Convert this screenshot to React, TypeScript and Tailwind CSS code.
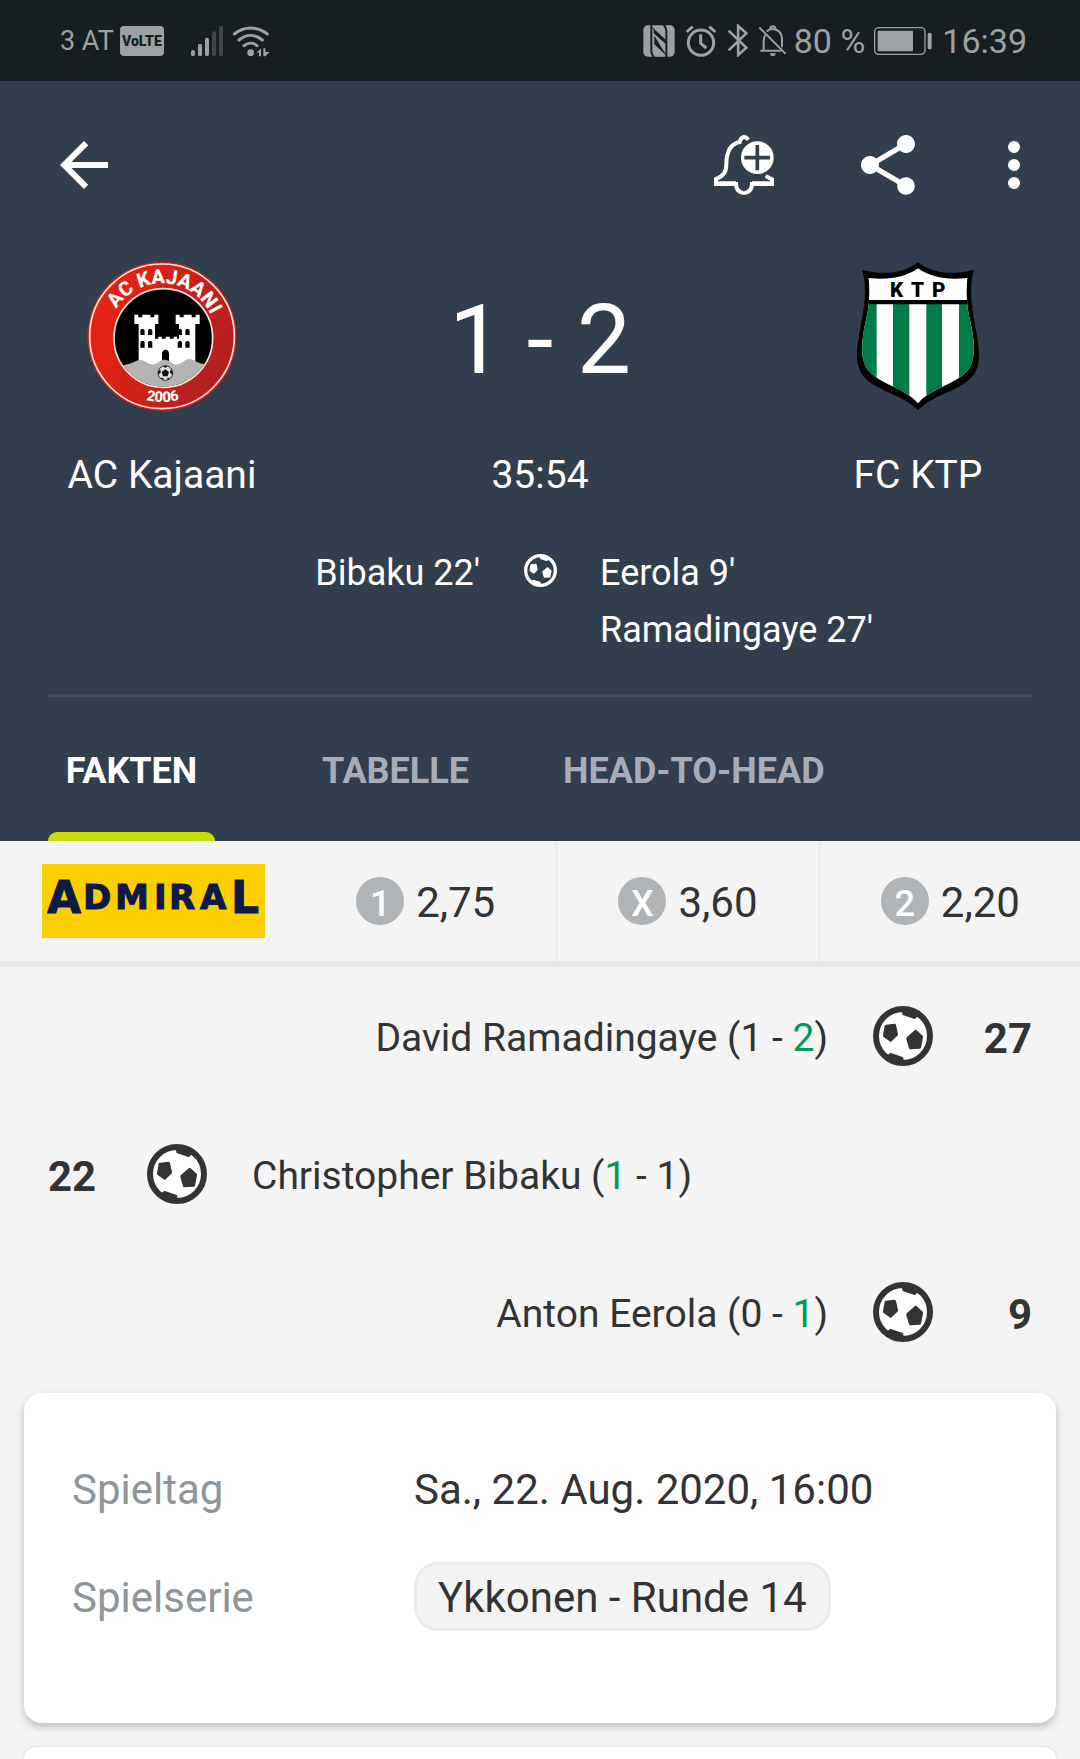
import React from 'react';

const GOALS = [
  { minute: '27', name: 'David Ramadingaye', home: '1', away: '2', side: 'away' },
  { minute: '22', name: 'Christopher Bibaku', home: '1', away: '1', side: 'home' },
  { minute: '9', name: 'Anton Eerola', home: '0', away: '1', side: 'away' },
];

const ODDS = [
  { label: '1', value: '2,75' },
  { label: 'X', value: '3,60' },
  { label: '2', value: '2,20' },
];

const Ball = ({ className, inner }: { className: string; inner: string }) => (
  <svg viewBox="99 78 180 180" className={className} aria-hidden="true">
    <circle cx="189" cy="168" r="81" fill={inner} stroke="currentColor" strokeWidth="18" />
    <g fill="currentColor">
      <path d="M134 137q1-3 4-3l25-3q4 0 5 4l6 27q0 3-2 5l-17 17q-3 3-6 0l-18-13q-3-2-2-5z" />
      <path d="M224 151q3-3 6 0l18 16q2 2 1 5l-6 31q-1 3-5 3l-26 2q-4 0-5-3l-8-28q-1-4 2-6z" />
      <path d="M183 88l5 17 33 11q4 2 7-2l4-4 14 10-20-32z" />
      <path d="M130 218l14 6 5-4q3-2 6 0l31 10q3 1 4 5l2 13-30 2z" />
    </g>
  </svg>
);

const StatusBar = () => (
  <div className="flex h-[81px] items-center bg-[#171e22] pr-[53px] pl-[60px] text-[#9da1a3]">
    <span className="text-[27px] leading-8">3 AT</span>
    <span className="ml-[6px] flex h-[30px] w-11 items-center justify-center rounded bg-[#9da1a3] text-sm font-black text-[#171e22]">
      VoLTE
    </span>
    <svg viewBox="450 72 102 96" className="ml-[26px] h-8 w-[34px]" aria-hidden="true">
      <g stroke="currentColor" strokeWidth="12" strokeLinecap="round">
        <path d="M459 153v7M480 134v26M501 116v44" />
        <path d="M522 97v63M543 80v80" opacity=".3" />
      </g>
    </svg>
    <svg viewBox="576 72 114 96" className="ml-2 h-8 w-[38px]" aria-hidden="true">
      <g fill="none" stroke="currentColor" strokeWidth="9" strokeLinecap="round">
        <path d="M583 99c30-24 68-24 99 0" />
        <path d="M597 117c22-18 48-18 70 0" />
        <path d="M612 134c13-10 28-10 39 0" />
      </g>
      <circle cx="632" cy="155" r="10" fill="currentColor" />
      <path d="M649 155l14-13v24h-6v-11zM670 142h6v11h13l-13 13h-6z" fill="currentColor" />
    </svg>
    <div className="ml-auto flex items-center">
      <svg viewBox="66 72 96 96" className="size-8" aria-hidden="true">
        <rect x="67" y="73" width="94" height="94" rx="14" fill="currentColor" />
        <g fill="none" stroke="#171e22" strokeWidth="6">
          <path d="M91 70v80c0 8 4 14 8 20" />
          <path d="M136 170V90c0-8-4-14-8-20" />
        </g>
        <path d="M89 74l45 42v13L98 96v-8zM100 104l38 62-38-36z" fill="#171e22" />
      </svg>
      <svg viewBox="192 72 96 96" className="ml-[10px] size-8" aria-hidden="true">
        <g fill="none" stroke="currentColor" strokeWidth="9">
          <circle cx="240" cy="125" r="38" />
          <path d="M197 93l18-16M283 93l-18-16" />
          <path d="M239 100v27l17 14" />
        </g>
      </svg>
      <svg viewBox="318 70 62 100" className="ml-[10px] h-[33px] w-[21px]" aria-hidden="true">
        <path
          d="M322 90l54 52-25 22V76l25 22-54 52"
          fill="none"
          stroke="currentColor"
          strokeWidth="8"
        />
      </svg>
      <svg viewBox="414 70 87 98" className="ml-[10px] h-[33px] w-[29px]" aria-hidden="true">
        <g fill="none" stroke="currentColor" strokeWidth="6">
          <path d="M418 80l79 79" />
          <path d="M421 150h62M431 147v-25c0-10 2-15 5-20M440 92c15-15 45-6 46 22v25" />
          <path d="M450 84c2-10 14-10 17 0" />
        </g>
        <path d="M449 157h19c-4 12-15 12-19 0z" fill="currentColor" />
      </svg>
      <span className="ml-[7px] text-[34px] leading-10">80 %</span>
      <svg viewBox="762 80 174 84" className="ml-[9px] h-7 w-[58px]" aria-hidden="true">
        <rect x="764" y="82" width="151" height="80" rx="12" fill="none" stroke="currentColor" strokeWidth="4" />
        <rect x="773" y="91" width="106" height="62" rx="3" fill="currentColor" />
        <rect x="923" y="97" width="12" height="50" rx="5" fill="currentColor" />
      </svg>
      <span className="ml-[10px] text-[34px] leading-10">16:39</span>
    </div>
  </div>
);

const Toolbar = () => (
  <div className="flex h-[168px] items-center pr-[30px] pl-12">
    <button type="button" aria-label="Zurück">
      <svg viewBox="0 0 24 24" className="size-[72px]" fill="currentColor">
        <path d="M20 11H7.83l5.59-5.59L12 4l-8 8 8 8 1.41-1.41L7.83 13H20v-2z" />
      </svg>
    </button>
    <button type="button" aria-label="Benachrichtigungen" className="ml-auto">
      <svg viewBox="54 57 216 216" className="size-[72px]">
        <g fill="none" stroke="#fff" strokeWidth="12">
          <path d="M175 89c-10-12-22-10-26 7-30 6-40 34-40 68 0 24-10 34-31 43v15h60c0 36 48 36 48 0h60v-14l-19-10" />
          <path d="M84 220h54M186 220h56" />
        </g>
        <circle cx="202" cy="143" r="49" fill="#fff" />
        <path d="M163 143h77M202 105v76" stroke="#313e4d" strokeWidth="11" />
      </svg>
    </button>
    <button type="button" aria-label="Teilen" className="ml-[72px]">
      <svg viewBox="0 0 24 24" className="size-[72px]" fill="currentColor">
        <path d="M18 16.08c-.76 0-1.44.3-1.96.77L8.91 12.7c.05-.23.09-.46.09-.7s-.04-.47-.09-.7l7.05-4.11c.54.5 1.25.81 2.04.81 1.66 0 3-1.34 3-3s-1.34-3-3-3-3 1.34-3 3c0 .24.04.47.09.7L8.04 9.81C7.5 9.31 6.79 9 6 9c-1.66 0-3 1.34-3 3s1.34 3 3 3c.79 0 1.5-.31 2.04-.81l7.12 4.16c-.05.21-.08.43-.08.65 0 1.61 1.31 2.92 2.92 2.92s2.92-1.31 2.92-2.92-1.31-2.92-2.92-2.92z" />
      </svg>
    </button>
    <button type="button" aria-label="Mehr" className="ml-[54px]">
      <svg viewBox="0 0 24 24" className="size-[72px]" fill="currentColor">
        <circle cx="12" cy="6" r="2" />
        <circle cx="12" cy="12" r="2" />
        <circle cx="12" cy="18" r="2" />
      </svg>
    </button>
  </div>
);

const KajaaniCrest = () => (
  <svg viewBox="48 30 450 450" className="size-[150px]" role="img" aria-label="AC Kajaani">
    <defs>
      <linearGradient id="red" x1="0" y1="0" x2="1" y2="0.4">
        <stop offset="0.3" stopColor="#e32213" />
        <stop offset="1" stopColor="#b32020" />
      </linearGradient>
      <clipPath id="disc">
        <circle cx="277" cy="261" r="146" />
      </clipPath>
      <path id="top" d="M113 257a160 160 0 0 1 320 0" />
      <path id="bottom" d="M79 257a196 196 0 0 0 392 0" />
    </defs>
    <circle cx="273" cy="256" r="224" fill="#c4201c" />
    <circle cx="273" cy="256" r="217" fill="url(#red)" stroke="#fbe3dd" strokeWidth="5" />
    <circle cx="277" cy="261" r="148" fill="#000" stroke="#fbe3dd" strokeWidth="5" />
    <g clipPath="url(#disc)">
      <path
        fill="#fff"
        d="M190 191h12v8h12v-8h24v8h12v-8h12v28h-10v44h10v-6h10v6h12v-6h12v6h12v-6h10v6h6v-44h-10v-28h12v8h12v-8h24v8h12v-8h12v28h-13v130H203V219h-13z"
      />
      <path
        fill="#000"
        d="M208 252v-12c0-8 13-8 13 0v12zM231 252v-12c0-8 13-8 13 0v12zM208 290v-14c0-8 13-8 13 0v14zM231 290v-14c0-8 13-8 13 0v14zM320 252v-12c0-8 13-8 13 0v12zM343 252v-12c0-8 13-8 13 0v12zM320 290v-14c0-8 13-8 13 0v14zM343 290v-14c0-8 13-8 13 0v14zM273 340v-32c0-16 21-16 21 0v32z"
      />
      <path
        fill="#b3b3b3"
        d="M120 348c25-2 50-6 68 -14 16-10 26-10 42 2 16 8 24 4 34-4 12-8 24-8 36 2 14 10 22 8 34 0 14-12 26-14 42-2 14 8 30 8 60 6v90H120z"
      />
      <circle cx="283" cy="366" r="22" fill="#ddd" stroke="#333" strokeWidth="3" />
      <path d="M283 355l11 8-4 13h-14l-4-13zM276 345h14l-7 6zM262 360l6-4 1 9-7 6zM304 360l-6-4-1 9 7 6zM268 381l8-1 2 7zM298 381l-8-1-2 7z" fill="#111" />
    </g>
    <g fill="#fff" className="font-['Roboto'] font-extrabold" textAnchor="middle">
      <text fontSize="60">
        <textPath href="#top" startOffset="52%">AC KAJAANI</textPath>
      </text>
      <text fontSize="44">
        <textPath href="#bottom" startOffset="50%">2006</textPath>
      </text>
    </g>
  </svg>
);

const KtpCrest = () => (
  <svg viewBox="51 33 372 450" className="h-[150px] w-[124px]" role="img" aria-label="FC KTP">
    <defs>
      <clipPath id="shield">
        <path d="M237 55c-36 26-86 36-148 29 4 46 2 86-8 126-14 60-20 120 8 152 38 44 108 50 148 98 40-48 110-54 148-98 28-32 22-92 8-152-10-40-12-80-8-126-62 7-112-3-148-29z" />
      </clipPath>
    </defs>
    <path d="M237 36c-40 32-96 42-168 23 16 50 8 110-4 171-20 100-14 134 27 166 50 36 103 41 145 85 42-44 95-49 145-85 41-32 47-66 27-166-12-61-20-121-4-171-72 19-128 9-168-23z" />
    <g clipPath="url(#shield)">
      <path fill="#fff" d="M54 33h366v450H54z" />
      <path fill="#007d46" d="M54 160h59v320H54zM162 160h49v320h-49zM262 160h47v320h-47zM360 160h60v320h-60z" />
      <path d="M54 150h366v13H54z" />
    </g>
    <text x="153 216 279" y="141" fontSize="62" className="font-['Roboto'] font-black">
      KTP
    </text>
  </svg>
);

const Scoreboard = () => (
  <div className="grid grid-cols-[3fr_4fr_3fr] justify-items-center pt-3 text-[39px] leading-[46px]">
    <KajaaniCrest />
    <div className="flex h-[150px] items-center pt-2 text-[96px]">1 - 2</div>
    <KtpCrest />
    <span className="mt-[41px]">AC Kajaani</span>
    <span className="mt-[41px]">35:54</span>
    <span className="mt-[41px]">FC KTP</span>
  </div>
);

const Scorers = () => (
  <div className="mt-[47px] grid grid-cols-[1fr_120px_1fr] text-4xl leading-[57px]">
    <div className="text-right">Bibaku 22'</div>
    <div className="flex h-[50px] items-center justify-center">
      <Ball className="size-[33px]" inner="none" />
    </div>
    <div>
      <p>Eerola 9'</p>
      <p>Ramadingaye 27'</p>
    </div>
  </div>
);

const Tabs = () => (
  <nav className="mx-12 mt-[35px] flex h-[147px] border-t-[3px] border-[#434e5e] text-4xl font-bold text-[#a6adb8]">
    <a href="#fakten" className="flex w-[167px] flex-col items-center text-white">
      <span className="flex flex-1 items-center pt-3">FAKTEN</span>
      <span className="h-[9px] w-full rounded-t-[9px] bg-[#c8dc00]" />
    </a>
    <a href="#tabelle" className="ml-[107px] flex items-center pt-[3px]">TABELLE</a>
    <a href="#head-to-head" className="ml-[94px] flex items-center pt-[3px]">HEAD-TO-HEAD</a>
  </nav>
);

const OddsBar = () => (
  <div className="flex h-[126px] border-b-[6px] border-[#e6e6e6]">
    <a href="#admiral" className="flex w-[296px] items-center pl-[42px]">
      <svg viewBox="0 0 223 74" className="h-[74px] w-[223px]" role="img" aria-label="Admiral">
        <path fill="#fdcf00" d="M0 0h223v74H0z" />
        <text fill="#0a1a4a" stroke="#0a1a4a" strokeWidth="1" fontSize="34" className="font-['DejaVu_Sans'] font-bold">
          <tspan x="5" y="49" fontSize="44">A</tspan>
          <tspan x="41 73 112 127 158" y="45">DMIRA</tspan>
          <tspan x="189" y="49" fontSize="44">L</tspan>
        </text>
      </svg>
    </a>
    {ODDS.map((odd, i) => (
      <button
        key={odd.label}
        type="button"
        className={
          i === 0
            ? 'flex flex-1 items-center justify-center gap-3'
            : 'flex flex-1 items-center justify-center gap-3 border-l-[3px] border-[#ededed]'
        }
      >
        <span className="flex size-12 items-center justify-center rounded-full bg-[#b0b4b7] pt-[6px] text-4xl leading-10 font-medium text-white">
          {odd.label}
        </span>
        <span className="pt-1 text-[42px] leading-[50px]">{odd.value}</span>
      </button>
    ))}
  </div>
);

const GoalRow = ({ goal }: { goal: (typeof GOALS)[number] }) => {
  const home = goal.side === 'home';
  return (
    <li
      className={
        home
          ? 'flex h-[138px] items-center px-12'
          : 'flex h-[138px] flex-row-reverse items-center px-12'
      }
    >
      <span className={home ? 'w-[99px] pt-1 text-[42px] font-bold' : 'w-[99px] pt-1 text-right text-[42px] font-bold'}>
        {goal.minute}
      </span>
      <Ball className="size-[60px]" inner="#fff" />
      <span className="mx-[45px] pt-1 text-[39px]">
        {goal.name} (<span className={home ? 'text-[#00985f]' : ''}>{goal.home}</span> -{' '}
        <span className={home ? '' : 'text-[#00985f]'}>{goal.away}</span>)
      </span>
    </li>
  );
};

const InfoCard = () => (
  <dl className="mx-6 mt-3 grid auto-rows-[108px] grid-cols-[342px_1fr] items-center rounded-[18px] bg-white pt-[43px] pr-12 pb-[71px] pl-12 text-[42px] leading-[50px] shadow-[0_4px_8px_rgba(0,0,0,0.22)]">
    <dt className="text-[#8f969a]">Spieltag</dt>
    <dd>Sa., 22. Aug. 2020, 16:00</dd>
    <dt className="text-[#8f969a]">Spielserie</dt>
    <dd className="flex pb-1">
      <a
        href="#ykkonen"
        className="flex h-[69px] items-center rounded-3xl border-[3px] border-[#ebebeb] bg-[#f3f3f3] px-[21px] pt-1"
      >
        Ykkonen - Runde 14
      </a>
    </dd>
  </dl>
);

const App = () => {
  return (
    <div className="flex min-h-screen flex-col bg-[#f4f4f4] font-['Roboto',sans-serif] text-[#333]">
      <StatusBar />
      <header className="bg-[#313e4d] text-white">
        <Toolbar />
        <Scoreboard />
        <Scorers />
        <Tabs />
      </header>
      <OddsBar />
      <ul>
        {GOALS.map((goal) => (
          <GoalRow key={goal.minute} goal={goal} />
        ))}
      </ul>
      <InfoCard />
      <div className="mx-6 mt-6 min-h-3 flex-1 rounded-t-[18px] bg-white shadow-[0_0_3px_rgba(0,0,0,0.12)]" />
    </div>
  );
};

export default App;
